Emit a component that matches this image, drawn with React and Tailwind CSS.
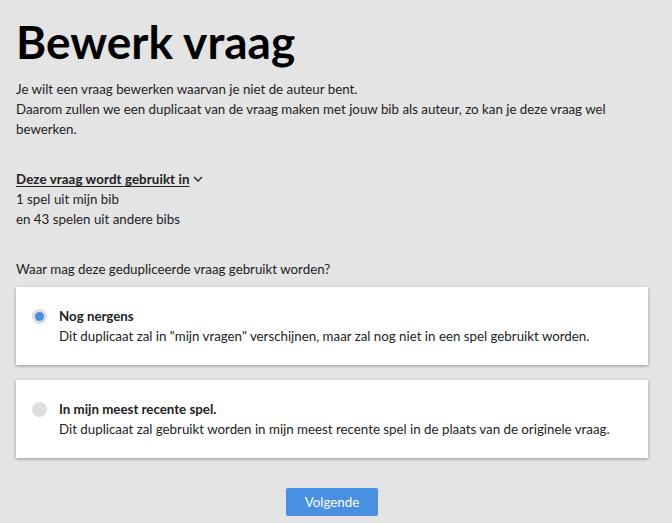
import { useState } from "react";

function Option({ title, text, checked, onClick }) {
  return (
    <div
      onClick={onClick}
      className="bg-white shadow-[0_1px_3px_rgba(0,0,0,0.35)] pl-4 pr-4 pt-[19px] pb-[19px] flex items-start gap-[12px] cursor-pointer"
    >
      <span className="mt-[3px] w-[15px] h-[15px] rounded-full flex items-center justify-center shrink-0 bg-[#dedede]">
        {checked && <span className="w-[9px] h-[9px] rounded-full bg-[#4a90e2]" />}
      </span>
      <div className="text-[13.3px] leading-[20px] text-[#222]">
        <div className="font-bold">{title}</div>
        <div>{text}</div>
      </div>
    </div>
  );
}

export default function App() {
  const [choice, setChoice] = useState(0);

  return (
    <div className="min-h-[523px] bg-[#e4e4e4] px-4 pt-[10px] pb-[7px] text-[#222] font-['Lato','Liberation_Sans',sans-serif]">
      <h1 className="text-[46px] leading-[64px] font-bold text-black">Bewerk vraag</h1>

      <p className="mt-[5px] text-[13.3px] leading-[20px]">
        Je wilt een vraag bewerken waarvan je niet de auteur bent.
        <br />
        Daarom zullen we een duplicaat van de vraag maken met jouw bib als auteur, zo kan je deze vraag wel bewerken.
      </p>

      <div className="mt-[30px] text-[13.3px] leading-[20px]">
        <div className="flex items-center gap-[2px]">
          <span className="font-bold tracking-[0.1px] underline underline-offset-2">Deze vraag wordt gebruikt in</span>
          <svg width="12" height="12" viewBox="0 0 12 12" fill="none" stroke="#222" strokeWidth="1.3">
            <path d="M2 4l4 4 4-4" />
          </svg>
        </div>
        <div>1 spel uit mijn bib</div>
        <div>en 43 spelen uit andere bibs</div>
      </div>

      <p className="mt-[30px] text-[13.3px] leading-[20px]">Waar mag deze gedupliceerde vraag gebruikt worden?</p>

      <div className="mr-[8px]">
        <div className="mt-[8px] flex flex-col gap-[15px]">
          <Option
            title="Nog nergens"
            text={'Dit duplicaat zal in "mijn vragen" verschijnen, maar zal nog niet in een spel gebruikt worden.'}
            checked={choice === 0}
            onClick={() => setChoice(0)}
          />
          <Option
            title="In mijn meest recente spel."
            text="Dit duplicaat zal gebruikt worden in mijn meest recente spel in de plaats van de originele vraag."
            checked={choice === 1}
            onClick={() => setChoice(1)}
          />
        </div>

        <div className="mt-[30px] flex justify-center">
          <button className="bg-[#4a90e2] text-white text-[13.3px] leading-[20px] w-[92px] h-[28px] rounded-[2px]">
            Volgende
          </button>
        </div>
      </div>
    </div>
  );
}
